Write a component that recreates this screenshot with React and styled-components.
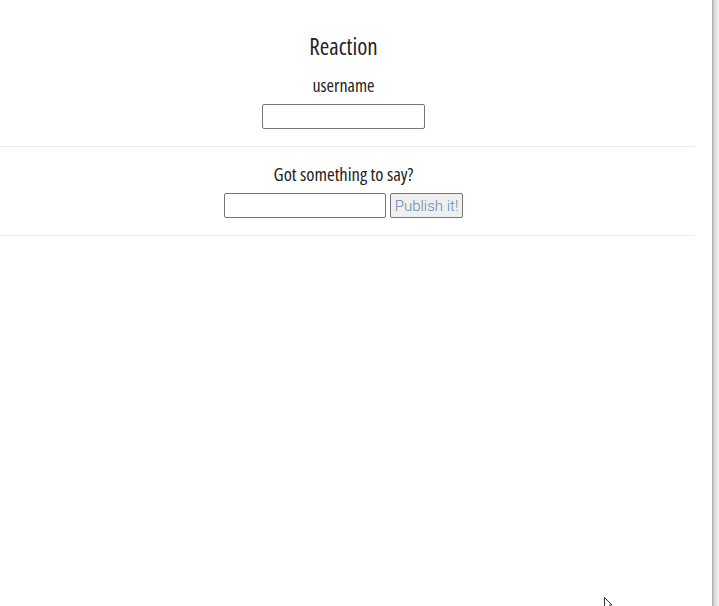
import React, { useState } from 'react';
import styled, { createGlobalStyle } from 'styled-components';

const GlobalStyle = createGlobalStyle`
  html, body {
    margin: 0;
    padding: 0;
    background: #fff;
    height: 100%;
  }
  #root {
    height: 100%;
  }
`;

const Frame = styled.div`
  display: flex;
  height: 606px;
  overflow: hidden;
  position: relative;
`;

const Page = styled.div`
  flex: 0 0 695px;
  font-family: 'Open Sans', 'DejaVu Sans Condensed', sans-serif;
  font-stretch: 75%;
  color: #232323;
`;

const WindowEdge = styled.div`
  margin-left: auto;
  width: 6px;
  background: linear-gradient(to right, #c8c8c8, #e6e6e6 60%, #f4f4f4);
  border-left: 1px solid #b0b0b0;
`;

const Section = styled.section`
  display: flex;
  flex-direction: column;
  align-items: center;
  padding: ${(p) => p.pad};
  padding-right: 8px;
  border-bottom: 1px solid #ececec;
`;

const Title = styled.h1`
  margin: 0;
  font-size: 23px;
  font-weight: 500;
  line-height: 30px;
`;

const Label = styled.div`
  font-size: ${(p) => p.size || 18}px;
  line-height: 22px;
  margin: ${(p) => p.margin};
`;

const TextInput = styled.input`
  box-sizing: border-box;
  width: ${(p) => p.w}px;
  height: 25px;
  border: 1px solid #767676;
  border-radius: 2px;
  background: #fff;
  padding: 1px 2px;
  font-family: 'Liberation Sans', sans-serif;
  font-size: 13px;
`;

const Row = styled.div`
  display: flex;
  gap: 4px;
`;

const PublishButton = styled.button`
  box-sizing: border-box;
  width: 73px;
  height: 25px;
  border: 1px solid #767676;
  border-radius: 2px;
  background: #efefef;
  color: #6389ae;
  font-family: 'Roboto', 'Liberation Sans', sans-serif;
  font-weight: 300;
  font-size: 15px;
  padding: 0;
`;

const Cursor = styled.svg`
  position: absolute;
  left: 604px;
  top: 597px;
`;

export default function App() {
  const [username, setUsername] = useState('');
  const [message, setMessage] = useState('');

  return (
    <Frame>
      <GlobalStyle />
      <Page>
        <Section pad="31px 0 17px">
          <Title>Reaction</Title>
          <Label margin="13px 0 8px">username</Label>
          <TextInput w={163} value={username} onChange={(e) => setUsername(e.target.value)} />
        </Section>
        <Section pad="16px 0 17px">
          <Label size={18.6} margin="0 0 8px">Got something to say?</Label>
          <Row>
            <TextInput w={162} value={message} onChange={(e) => setMessage(e.target.value)} />
            <PublishButton>Publish it!</PublishButton>
          </Row>
        </Section>
      </Page>
      <WindowEdge />
      <Cursor width="12" height="12" viewBox="0 0 12 12">
        <path d="M0.5 0.5 L0.5 11 M0.5 0.5 L8 8 L5 8" fill="none" stroke="#333" strokeWidth="1" />
      </Cursor>
    </Frame>
  );
}
